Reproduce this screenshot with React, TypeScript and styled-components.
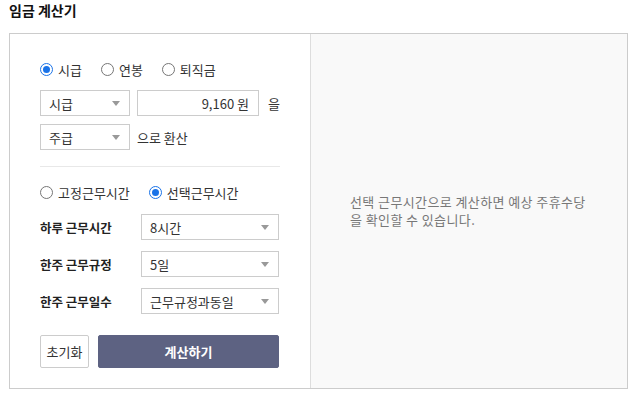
import React, { useState } from "react";
import styled, { createGlobalStyle } from "styled-components";

const GlobalStyle = createGlobalStyle`
  body {
    margin: 0;
    background: #fff;
    font-family: "Noto Sans CJK KR", "Noto Sans", sans-serif;
    color: #333;
  }
`;

const Page = styled.div`
  padding: 0 7px 0 9px;
  width: 619px;
`;

const Title = styled.h1`
  margin: 0 0 13px;
  font-size: 14px;
  line-height: 20px;
  font-weight: bold;
  color: #111;
`;

const Box = styled.div`
  display: flex;
  height: 354px;
  border: 1px solid #ccc;
`;

const LeftPanel = styled.div`
  width: 240px;
  padding: 25px 30px 0;
  border-right: 1px solid #ddd;
`;

const RightPanel = styled.div`
  flex: 1;
  display: flex;
  align-items: center;
  padding: 0 39px;
  background: #f9f9f9;
`;

const Notice = styled.p`
  margin: 0;
  font-size: 13px;
  letter-spacing: 0.4px;
  line-height: 18px;
  color: #777;
`;

const RadioRow = styled.div<{ $gap: number; $top?: number }>`
  display: flex;
  align-items: center;
  height: 20px;
  gap: ${(p) => p.$gap}px;
  margin-top: ${(p) => p.$top || 0}px;
`;

const RadioItem = styled.label`
  display: flex;
  align-items: center;
  gap: 5px;
  font-size: 13px;
  color: #333;
  cursor: pointer;
`;

const RadioDot = styled.span<{ $checked: boolean }>`
  box-sizing: border-box;
  width: 13px;
  height: 13px;
  border-radius: 50%;
  border: 1px solid ${(p) => (p.$checked ? "#1a73e8" : "#767676")};
  background: #fff;
  display: flex;
  align-items: center;
  justify-content: center;
  &::after {
    content: "";
    width: 7px;
    height: 7px;
    border-radius: 50%;
    background: ${(p) => (p.$checked ? "#1a73e8" : "transparent")};
  }
`;

const Line = styled.div<{ $top: number }>`
  display: flex;
  align-items: center;
  gap: 7px;
  margin-top: ${(p) => p.$top}px;
  font-size: 13px;
  color: #333;
`;

const SelectBox = styled.div<{ $width: number }>`
  box-sizing: border-box;
  width: ${(p) => p.$width}px;
  height: 26px;
  border: 1px solid #ccc;
  background: #fff;
  display: flex;
  align-items: center;
  justify-content: space-between;
  padding: 0 9px 0 8px;
  font-size: 13px;
  color: #333;
  &::after {
    content: "";
    border-left: 4px solid transparent;
    border-right: 4px solid transparent;
    border-top: 5px solid #999;
  }
`;

const AmountBox = styled.div`
  box-sizing: border-box;
  width: 122px;
  height: 26px;
  border: 1px solid #ccc;
  display: flex;
  align-items: center;
  justify-content: flex-end;
  padding-right: 9px;
  font-size: 13px;
  color: #333;
`;

const Suffix = styled.span<{ $left?: number }>`
  margin-left: ${(p) => p.$left || 0}px;
`;

const Divider = styled.hr`
  margin: 16px 0 0;
  border: 0;
  border-top: 1px solid #e8e8e8;
`;

const FieldRow = styled.div<{ $top: number }>`
  display: flex;
  align-items: center;
  margin-top: ${(p) => p.$top}px;
`;

const FieldLabel = styled.span`
  width: 101px;
  font-size: 12.5px;
  font-weight: bold;
  color: #222;
`;

const Buttons = styled.div`
  display: flex;
  gap: 9px;
  margin-top: 21px;
`;

const Button = styled.button<{ $primary?: boolean }>`
  box-sizing: border-box;
  height: 33px;
  width: ${(p) => (p.$primary ? "181px" : "49px")};
  border: 1px solid ${(p) => (p.$primary ? "#5d6282" : "#ccc")};
  border-radius: 2px;
  background: ${(p) => (p.$primary ? "#5d6282" : "#fff")};
  color: ${(p) => (p.$primary ? "#fff" : "#333")};
  font-family: inherit;
  font-size: 13px;
  font-weight: ${(p) => (p.$primary ? "bold" : "normal")};
  padding: 0;
  cursor: pointer;
`;

const payTypes = ["시급", "연봉", "퇴직금"];
const workTypes = ["고정근무시간", "선택근무시간"];
const fields = [
  { label: "하루 근무시간", value: "8시간" },
  { label: "한주 근무규정", value: "5일" },
  { label: "한주 근무일수", value: "근무규정과동일" },
];

export default function App() {
  const [payType, setPayType] = useState("시급");
  const [workType, setWorkType] = useState("선택근무시간");

  return (
    <>
      <GlobalStyle />
      <Page>
        <Title>임금 계산기</Title>
        <Box>
          <LeftPanel>
            <RadioRow $gap={19}>
              {payTypes.map((t) => (
                <RadioItem key={t} onClick={() => setPayType(t)}>
                  <RadioDot $checked={payType === t} />
                  {t}
                </RadioItem>
              ))}
            </RadioRow>
            <Line $top={11}>
              <SelectBox $width={90}>시급</SelectBox>
              <AmountBox>9,160 원</AmountBox>
              <Suffix $left={2}>을</Suffix>
            </Line>
            <Line $top={8}>
              <SelectBox $width={90}>주급</SelectBox>
              <Suffix>으로 환산</Suffix>
            </Line>
            <Divider />
            <RadioRow $gap={19} $top={15}>
              {workTypes.map((t) => (
                <RadioItem key={t} onClick={() => setWorkType(t)}>
                  <RadioDot $checked={workType === t} />
                  {t}
                </RadioItem>
              ))}
            </RadioRow>
            {fields.map((f, i) => (
              <FieldRow key={f.label} $top={i === 0 ? 12 : 11}>
                <FieldLabel>{f.label}</FieldLabel>
                <SelectBox $width={138}>{f.value}</SelectBox>
              </FieldRow>
            ))}
            <Buttons>
              <Button>초기화</Button>
              <Button $primary>계산하기</Button>
            </Buttons>
          </LeftPanel>
          <RightPanel>
            <Notice>
              선택 근무시간으로 계산하면 예상 주휴수당
              <br />을 확인할 수 있습니다.
            </Notice>
          </RightPanel>
        </Box>
      </Page>
    </>
  );
}
